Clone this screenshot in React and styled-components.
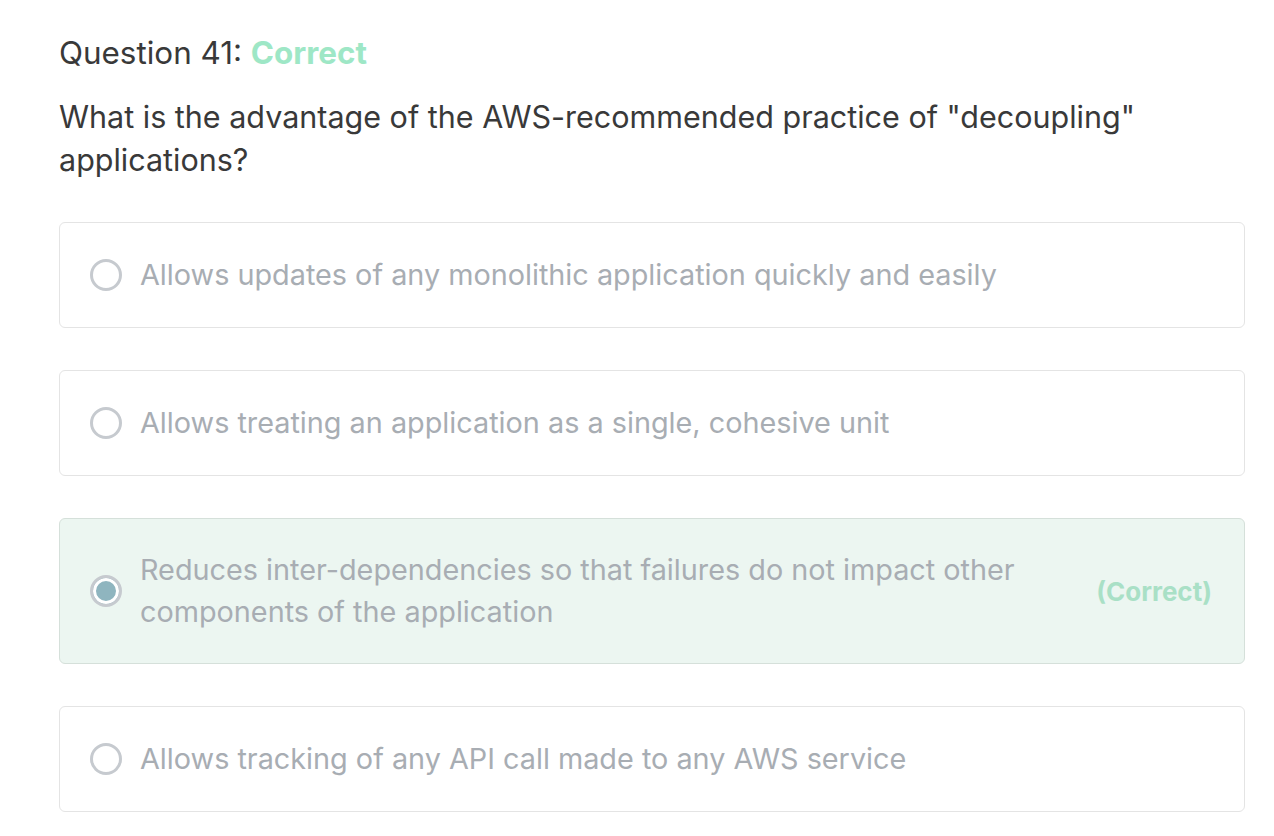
import styled, { createGlobalStyle } from 'styled-components';

const GlobalStyle = createGlobalStyle`
  body {
    margin: 0;
    background: #ffffff;
    font-family: Inter, "Liberation Sans", sans-serif;
  }
`;

const options = [
  { text: 'Allows updates of any monolithic application quickly and easily' },
  { text: 'Allows treating an application as a single, cohesive unit' },
  {
    text: 'Reduces inter-dependencies so that failures do not impact other components of the application',
    selected: true,
    correct: true,
  },
  { text: 'Allows tracking of any API call made to any AWS service' },
];

const App = () => {
  return (
    <Page>
      <GlobalStyle />
      <Title>
        Question 41: <Status>Correct</Status>
      </Title>
      <Prompt>
        What is the advantage of the AWS-recommended practice of "decoupling" applications?
      </Prompt>
      <List>
        {options.map((o) => (
          <Option key={o.text} $selected={o.selected}>
            <Radio $selected={o.selected} />
            <OptionText>{o.text}</OptionText>
            {o.correct ? <Tag>(Correct)</Tag> : null}
          </Option>
        ))}
      </List>
    </Page>
  );
};

export default App;

const Page = styled.div`
  padding: 34px 29px 20px 59px;
  color: #393939;
`;

const Title = styled.div`
  font-size: 31.4px;
  line-height: 38px;
  margin-bottom: 23px;
`;

const Status = styled.span`
  color: #9ee7c6;
  font-weight: 700;
`;

const Prompt = styled.div`
  font-size: 30.5px;
  line-height: 43px;
  max-width: 1150px;
  margin-bottom: 41px;
`;

const List = styled.div`
  display: flex;
  flex-direction: column;
  gap: 42px;
`;

const Option = styled.div`
  display: flex;
  align-items: center;
  padding: ${(p) => (p.$selected ? '30px' : '31px')} 32px ${(p) => (p.$selected ? '30px' : '31px')} 30px;
  border: 1px solid ${(p) => (p.$selected ? '#d5e0da' : '#e4e4e4')};
  border-radius: 6px;
  background: ${(p) => (p.$selected ? '#ecf6f1' : '#ffffff')};
`;

const Radio = styled.span`
  flex: none;
  box-sizing: border-box;
  width: 32px;
  height: 32px;
  border-radius: 50%;
  border: 3px solid #c6cacf;
  background: ${(p) => (p.$selected ? '#8fb5bf' : 'transparent')};
  box-shadow: ${(p) => (p.$selected ? 'inset 0 0 0 3px #ffffff' : 'none')};
  margin-right: 18px;
`;

const OptionText = styled.div`
  flex: 1;
  font-size: 28.8px;
  line-height: 42px;
  color: #a8adb3;
`;

const Tag = styled.span`
  flex: none;
  margin-left: 40px;
  font-size: 26px;
  font-weight: 700;
  color: #a9e0c6;
`;
